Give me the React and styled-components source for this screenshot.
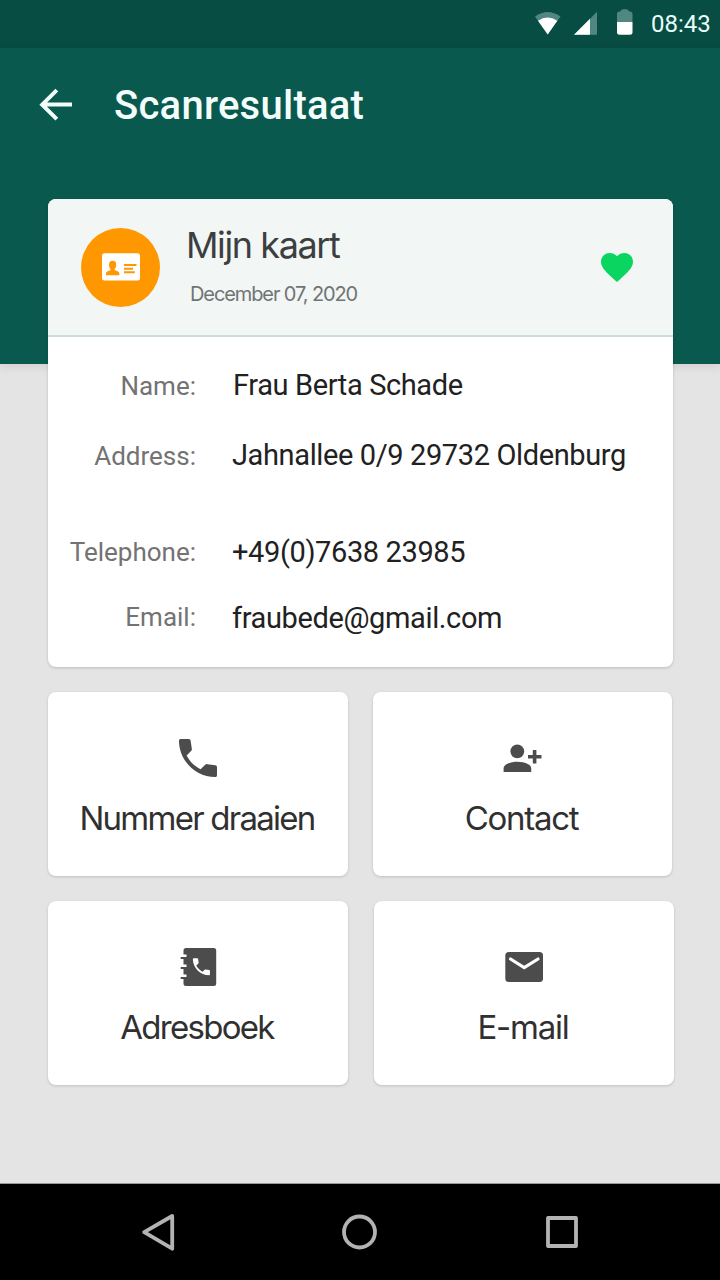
import React from 'react';
import styled, { createGlobalStyle } from 'styled-components';


const contact = [
    { label: 'Name:', value: 'Frau Berta Schade', height: 70, indent: 1, drop: 1 },
    { label: 'Address:', value: 'Jahnallee 0/9 29732 Oldenburg', height: 97, indent: 0, drop: 1 },
    { label: 'Telephone:', value: '+49(0)7638 23985', height: 66, indent: 0, drop: 0 },
    { label: 'Email:', value: 'fraubede@gmail.com', height: 48, indent: 0, drop: -1 },
]

const App = () => {
    return (
        <Screen>
            <GlobalStyle />
            <StatusBar>
                <WifiIcon />
                <SignalIcon />
                <BatteryIcon />
                <Clock>08:43</Clock>
            </StatusBar>
            <Header>
                <BackIcon />
                <Title>Scanresultaat</Title>
            </Header>
            <Content>
                <Card>
                    <CardHeader>
                        <Avatar><IdCardIcon /></Avatar>
                        <CardTitles>
                            <CardTitle>Mijn kaart</CardTitle>
                            <CardDate>December 07, 2020</CardDate>
                        </CardTitles>
                        <HeartIcon />
                    </CardHeader>
                    <CardBody>
                        {contact.map((item) => (
                            <Row key={item.label} $height={item.height}>
                                <Label $drop={item.drop}>{item.label}</Label>
                                <Value $indent={item.indent}>{item.value}</Value>
                            </Row>
                        ))}
                    </CardBody>
                </Card>
                <TileRow $gap={25}>
                    <Tile $width={300}>
                        <TileIcon><PhoneIcon /></TileIcon>
                        <TileText $tracking={-1.75}>Nummer draaien</TileText>
                    </Tile>
                    <Tile $width={299}>
                        <TileIcon><AddPersonIcon /></TileIcon>
                        <TileText $tracking={-1.3}>Contact</TileText>
                    </Tile>
                </TileRow>
                <TileRow $gap={26}>
                    <Tile $width={300}>
                        <TileIcon><BookIcon /></TileIcon>
                        <TileText $tracking={-1.7}>Adresboek</TileText>
                    </Tile>
                    <Tile $width={300}>
                        <TileIcon><MailIcon /></TileIcon>
                        <TileText $tracking={-1.2}>E-mail</TileText>
                    </Tile>
                </TileRow>
            </Content>
            <NavBar>
                <NavIcons />
            </NavBar>
        </Screen>
    );
};

const handset = "M6.620 10.790c1.440 2.830 3.760 5.140 6.590 6.590l2.200-2.200c.270-.270.670-.360 1.020-.240l3.770.500c.450.050.800.400.800.900V20c0 .600-.250 1-.800 1C10.800 21 3 13.200 3 3.800c0-.550.350-.800.900-.800H7.600c.500 0 .850.350.900.800l.570 3.770c.110.350.030.740-.250 1.020l-2.200 2.200z"

const WifiIcon = () => (
    <svg width="26" height="24" viewBox="535 11 26 24">
        <path d="M535 16.500Q547.500 7.500 560.500 16.500L547.700 34.500Z" fill="#508780" />
        <path d="M538 20.700Q547.600 14.300 557.300 20.700L547.700 34.500Z" fill="#fff" />
    </svg>
)

const SignalIcon = () => (
    <svg width="24" height="24" viewBox="574 11 24 24">
        <path d="M597 11.800V34.800H574Z" fill="#508780" />
        <path d="M590 18.800V34.800H574Z" fill="#fff" />
    </svg>
)

const BatteryIcon = () => (
    <svg width="16" height="26" viewBox="617 9 16 26">
        <path d="M617 22V14Q617 11.500 619.500 11.500H620.500Q621 9.300 623 9.300H626.500Q628.500 9.300 629 11.500H630Q632.500 11.500 632.500 14V22Z" fill="#508780" />
        <path d="M617 22H632.500V32.500Q632.500 34.800 630 34.800H619.500Q617 34.800 617 32.500Z" fill="#fff" />
    </svg>
)

const BackIcon = () => (
    <svg width="34" height="34" viewBox="39 88 34 34" fill="none" stroke="#f3fdfb" strokeWidth="4">
        <path d="M72 104.500H43M56.800 90.200L42.200 104.700L56.800 119.200" />
    </svg>
)

const IdCardIcon = () => (
    <svg width="38" height="28" viewBox="102 253 38 28">
        <rect x="102" y="253.200" width="38" height="27.300" rx="2.500" fill="#fff" />
        <ellipse cx="112.600" cy="264.900" rx="3.600" ry="4.200" fill="#ff9800" />
        <path d="M110.500 267H114.700V270.200Q119 271.200 119.300 273V275.200H106V273Q106.300 271.200 110.500 270.200Z" fill="#ff9800" />
        <path d="M124 265H136.500M124 268.700H133M124 272.300H134.800" stroke="#ff9800" strokeWidth="1.900" />
    </svg>
)

const HeartIcon = () => (
    <HeartSvg width="32" height="29" viewBox="2 3 20 18.350" preserveAspectRatio="none">
        <path fill="#0bd561" d="M12 21.350l-1.450-1.320C5.400 15.360 2 12.280 2 8.500 2 5.420 4.420 3 7.500 3c1.740 0 3.410.810 4.500 2.090C13.090 3.810 14.760 3 16.500 3 19.580 3 22 5.420 22 8.500c0 3.780-3.400 6.860-8.550 11.540L12 21.350z" />
    </HeartSvg>
)

const PhoneIcon = () => (
    <svg width="38" height="38" viewBox="3 3 18 18">
        <path fill="#4c4c4c" d={handset} />
    </svg>
)

const AddPersonIcon = () => (
    <svg width="39" height="38" viewBox="503 739 39 38" fill="#4c4c4c">
        <circle cx="517.300" cy="751.300" r="6.900" />
        <path d="M503.600 772V768.500C503.600 764 511 761.700 517.300 761.700S531.200 764 531.200 768.500V772Z" />
        <path d="M534.600 750V763.500M528 756.700H541.500" stroke="#4c4c4c" strokeWidth="3.600" />
    </svg>
)

const BookIcon = () => (
    <svg width="37" height="38" viewBox="180 948 37 38">
        <rect x="183.500" y="948" width="32.700" height="38" rx="2.500" fill="#4c4c4c" />
        <path d="M183 955.800H186.500M183 965.800H186.500M183 975.800H186.500" stroke="#fff" strokeWidth="2.600" />
        <path d="M180.700 958H187M180.700 968H187M180.700 978H187" stroke="#4c4c4c" strokeWidth="2" />
        <path transform="translate(190 955.300) scale(.950)" fill="#fff" d={handset} />
    </svg>
)

const MailIcon = () => (
    <svg width="38" height="38" viewBox="505 948 38 38">
        <rect x="505.300" y="952" width="37.700" height="30" rx="3.500" fill="#4c4c4c" />
        <path d="M510.500 959L524.200 967.700L538 959" fill="none" stroke="#fff" strokeWidth="3.200" strokeLinecap="round" />
    </svg>
)

const NavIcons = () => (
    <svg width="440" height="40" viewBox="140 1212 440 40" fill="none" stroke="#b3b3b3" strokeWidth="3.800" strokeLinejoin="round">
        <path d="M172.200 1216L144.200 1232.200L172.200 1248.700Z" />
        <circle cx="359.500" cy="1232" r="15.500" />
        <rect x="548" y="1218" width="28" height="28" />
    </svg>
)


const GlobalStyle = createGlobalStyle`
    body{
        margin:0;
        background:#e4e4e4;
    }
    *{ box-sizing:border-box; }
    svg{
        display:block;
        flex-shrink:0;
    }
`

const Screen = styled.div`
    width:720px;
    height:1280px;
    display:flex;
    flex-direction:column;
    overflow:hidden;
    background:#e4e4e4;
    font-family:Roboto, "Liberation Sans", sans-serif;
`

const StatusBar = styled.div`
    height:48px;
    flex-shrink:0;
    display:flex;
    justify-content:flex-end;
    padding:11px 9px 0 0;
    background:#074d44;

    svg:nth-of-type(2){ margin-left:13px; }
    svg:nth-of-type(3){ margin:-2px 0 0 19px; }
`

const Clock = styled.div`
    width:60px;
    margin-left:18px;
    font-size:24px;
    line-height:26px;
    color:#e9fffb;
    white-space:nowrap;
`

const Header = styled.div`
    height:316px;
    flex-shrink:0;
    display:flex;
    align-items:flex-start;
    padding:40px 39px;
    background:#0a594f;
    box-shadow:0 2px 10px rgba(0,0,0,.1);
`

const Title = styled.h1`
    margin:-6px 0 0 41px;
    font-size:40px;
    line-height:48px;
    font-weight:500;
    letter-spacing:.25px;
    color:#f3fdfb;
`

const Content = styled.div`
    flex:1;
    display:flex;
    flex-direction:column;
    gap:25px;
    margin-top:-165px;
    padding:0 46px 0 48px;
`

const Card = styled.div`
    width:625px;
    height:468px;
    border-radius:8px;
    overflow:hidden;
    background:#fff;
    box-shadow:0 1px 3px rgba(0,0,0,.18);
`

const CardHeader = styled.div`
    height:138px;
    display:flex;
    align-items:center;
    padding:0 40px 0 33px;
    background:#f2f6f5;
    border-bottom:2px solid #cddeda;
`

const HeartSvg = styled.svg`
    margin-top:1px;
`

const Avatar = styled.div`
    width:79px;
    height:79px;
    display:flex;
    align-items:center;
    justify-content:center;
    border-radius:50%;
    background:#ff9800;
`

const CardTitles = styled.div`
    flex:1;
    padding:0 0 6px 26px;
    font-family:Inter, "Liberation Sans", sans-serif;
`

const CardTitle = styled.div`
    font-size:36px;
    line-height:48px;
    letter-spacing:-1.4px;
    color:#3c3f3f;
`

const CardDate = styled.div`
    margin-left:4px;
    padding-top:11px;
    font-size:20px;
    line-height:28px;
    letter-spacing:-1.1px;
    color:#717474;
`

const CardBody = styled.div`
    padding-top:24px;
`

const Row = styled.div`
    height:${props => props.$height}px;
    display:grid;
    grid-template-columns:148px 1fr;
    column-gap:36px;
    line-height:48px;
    white-space:nowrap;
`

const Label = styled.div`
    margin-top:${props => props.$drop}px;
    text-align:right;
    font-size:26px;
    color:#737373;
`

const Value = styled.div`
    padding-left:${props => props.$indent}px;
    font-size:29px;
    letter-spacing:-.38px;
    color:#212121;
`

const TileRow = styled.div`
    display:flex;
    gap:${props => props.$gap}px;
`

const Tile = styled.div`
    width:${props => props.$width}px;
    height:184px;
    display:flex;
    flex-direction:column;
    align-items:center;
    padding-top:47px;
    border-radius:8px;
    background:#fff;
    box-shadow:0 1px 3px rgba(0,0,0,.16);
`

const TileIcon = styled.div`
    height:38px;
`

const TileText = styled.div`
    margin-top:20px;
    padding-right:2px;
    font-family:Inter, "Liberation Sans", sans-serif;
    font-size:33px;
    line-height:42px;
    letter-spacing:${props => props.$tracking}px;
    color:#303030;
`

const NavBar = styled.div`
    height:97px;
    flex-shrink:0;
    display:flex;
    justify-content:center;
    padding-top:28px;
    border-top:1px solid #999;
    background:#000;
`

export default App
